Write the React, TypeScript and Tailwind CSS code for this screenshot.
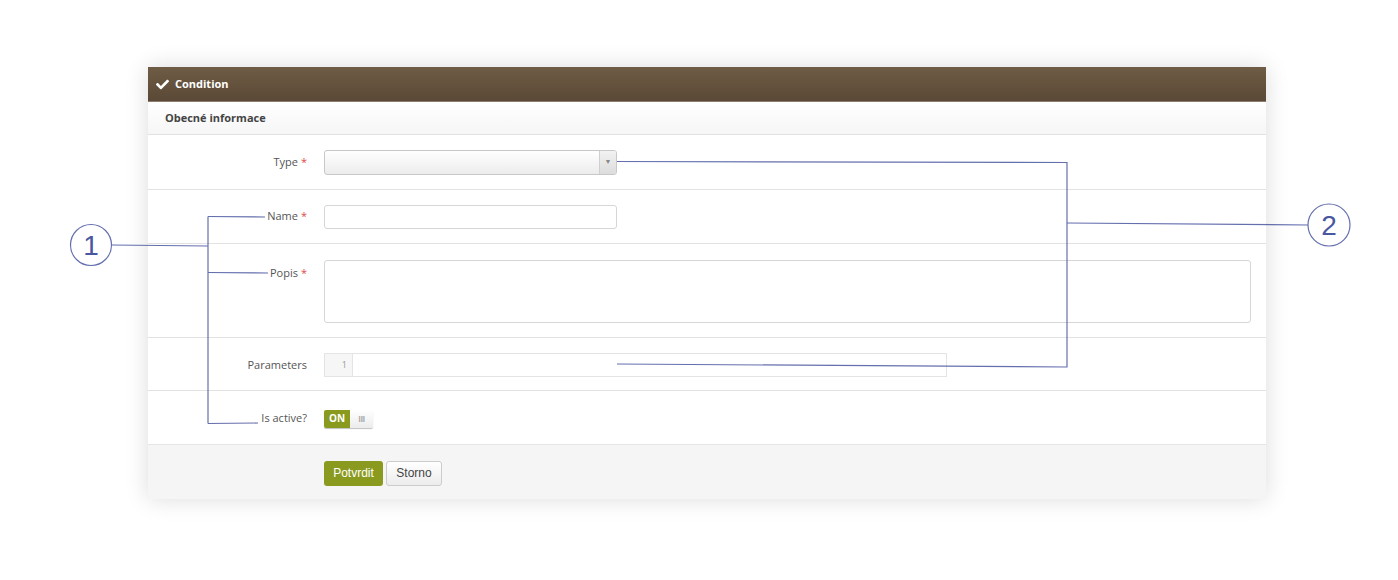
import { FaCheck } from "react-icons/fa";

const font = { fontFamily: '"Open Sans", "Liberation Sans", sans-serif' };

function Label({ text, required }: { text: string; required?: boolean }) {
  return (
    <div className="w-[176px] shrink-0 pr-[17px] text-right text-[11px] text-[#555]">
      {text}
      {required && <span className="ml-[3px] text-[#e04a4a]">*</span>}
    </div>
  );
}

function Annotations() {
  const c = "#4a56a0";
  return (
    <svg className="pointer-events-none absolute left-0 top-0" width="1398" height="580" viewBox="0 0 1398 580">
      <g fill="none" stroke={c} strokeWidth="1.2" opacity="0.85">
        <circle cx="91" cy="245" r="20.5" fill="#fff" />
        <path d="M111.5 245 L208 246" />
        <path d="M208 216.5 L208 423.5" />
        <path d="M208 216.5 L265 217" />
        <path d="M208 272.5 L268 273" />
        <path d="M208 423.5 L258 423" />

        <circle cx="1329" cy="225" r="21" fill="#fff" />
        <path d="M1308 225 L1067 223" />
        <path d="M617 161.5 L1067 162.5 L1067 367 L617 364" />
      </g>
      <text x="91" y="255" textAnchor="middle" fontSize="28" fill={c} style={{ fontFamily: '"Liberation Sans", Arial, sans-serif' }}>
        1
      </text>
      <text x="1329" y="235" textAnchor="middle" fontSize="28" fill={c} style={{ fontFamily: '"Liberation Sans", Arial, sans-serif' }}>
        2
      </text>
    </svg>
  );
}

export default function App() {
  return (
    <div className="relative h-[580px] w-[1398px] overflow-hidden bg-white" style={font}>
      <div className="pl-[148px] pt-[67px]">
        <div className="w-[1118px] bg-white shadow-[0_0_22px_rgba(0,0,0,0.14)]">
          {/* Header */}
          <div className="flex h-[35px] items-center gap-[6px] border-b border-[#8c7d6b] bg-gradient-to-b from-[#6f5c46] to-[#5a4936] pl-[8px] text-white">
            <FaCheck className="h-[13px] w-[13px]" />
            <span className="text-[11px] font-bold">Condition</span>
          </div>

          {/* Section title */}
          <div className="flex h-[33px] items-center border-b border-[#e2e2e2] bg-gradient-to-b from-white to-[#f6f6f6] pl-[17px] pt-[1px]">
            <span className="text-[11px] font-bold text-[#444]">Obecné informace</span>
          </div>

          {/* Type */}
          <div className="flex h-[55px] items-center border-b border-[#e2e2e2]">
            <Label text="Type" required />
            <div className="flex h-[25px] w-[293px] overflow-hidden rounded-[3px] border border-[#c8c8c8] bg-gradient-to-b from-white to-[#ececec]">
              <div className="flex-1" />
              <div className="flex w-[17px] items-center justify-center border-l border-[#cfcfcf] bg-gradient-to-b from-[#f2f2f2] to-[#dcdcdc]">
                <span className="text-[7px] text-[#888]">▼</span>
              </div>
            </div>
          </div>

          {/* Name */}
          <div className="flex h-[54px] items-center border-b border-[#e2e2e2]">
            <Label text="Name" required />
            <div className="h-[24px] w-[293px] rounded-[3px] border border-[#d6d6d6] bg-white" />
          </div>

          {/* Popis */}
          <div className="flex h-[94px] items-start border-b border-[#e2e2e2] pt-[21px]">
            <Label text="Popis" required />
            <div className="-mt-[5px] h-[63px] w-[927px] rounded-[3px] border border-[#d6d6d6] bg-white" />
          </div>

          {/* Parameters */}
          <div className="flex h-[53px] items-center border-b border-[#e2e2e2] pt-[2px]">
            <Label text="Parameters" />
            <div className="flex h-[24px] w-[623px] border border-[#e4e4e4] bg-white">
              <div className="flex w-[28px] items-center justify-end border-r border-[#e4e4e4] bg-[#f6f6f6] pr-[5px] text-[9px] text-[#999]">
                1
              </div>
            </div>
          </div>

          {/* Is active */}
          <div className="flex h-[54px] items-center border-b border-[#e6e6e6] pt-[2px]">
            <Label text="Is active?" />
            <div className="flex h-[18px] w-[49px] overflow-hidden rounded-[2px] shadow-[0_1px_1px_rgba(0,0,0,0.25)]">
              <div className="flex w-[26px] items-center justify-center bg-[#8a9a1f] text-[10px] font-bold text-white">ON</div>
              <div className="flex flex-1 items-center justify-center bg-gradient-to-b from-white to-[#ececec] text-[8px] font-bold tracking-[-0.5px] text-[#aaa]">
                III
              </div>
            </div>
          </div>

          {/* Footer */}
          <div className="flex h-[54px] items-center gap-[3px] bg-[#f5f5f5] pl-[176px] pt-[2px]">
            <button
              className="h-[25px] w-[59px] rounded-[3px] bg-[#8a9a1f] text-[12px] text-white"
              style={{ fontFamily: '"Liberation Sans", Arial, sans-serif' }}
            >
              Potvrdit
            </button>
            <button
              className="h-[25px] w-[56px] rounded-[3px] border border-[#cccccc] bg-gradient-to-b from-white to-[#ececec] text-[12px] text-[#444]"
              style={{ fontFamily: '"Liberation Sans", Arial, sans-serif' }}
            >
              Storno
            </button>
          </div>
        </div>
      </div>
      <Annotations />
    </div>
  );
}
